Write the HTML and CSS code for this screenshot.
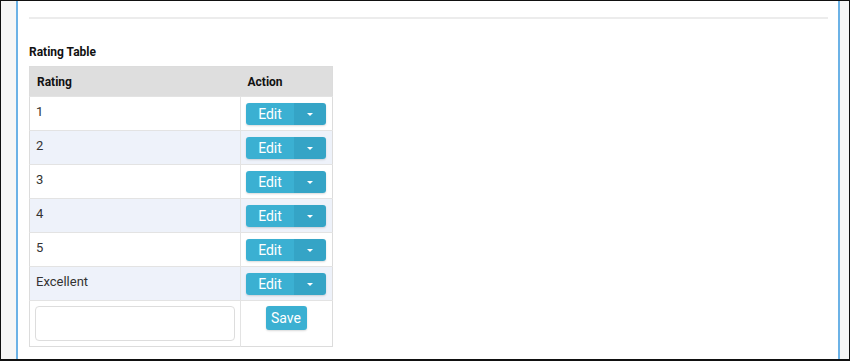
FILE: index.html
```html
<!DOCTYPE html>
<html lang="en">
<head>
    <meta charset="UTF-8">
    <meta name="viewport" content="width=device-width, initial-scale=1.0">
    <title>Rating Table</title>
    <link rel="stylesheet" href="styles.css">
</head>
<body>
    <div class="window">
        <div class="panel">
            <hr class="divider">
            <h4 class="table-title">Rating Table</h4>
            <table class="rating-table">
                <thead>
                    <tr>
                        <th class="col-rating">Rating</th>
                        <th class="col-action">Action</th>
                    </tr>
                </thead>
                <tbody>
                    <tr>
                        <td>1</td>
                        <td>
                            <div class="btn-group"><button class="btn-edit">Edit</button><button class="btn-caret"><span class="caret"></span></button></div>
                        </td>
                    </tr>
                    <tr>
                        <td>2</td>
                        <td>
                            <div class="btn-group"><button class="btn-edit">Edit</button><button class="btn-caret"><span class="caret"></span></button></div>
                        </td>
                    </tr>
                    <tr>
                        <td>3</td>
                        <td>
                            <div class="btn-group"><button class="btn-edit">Edit</button><button class="btn-caret"><span class="caret"></span></button></div>
                        </td>
                    </tr>
                    <tr>
                        <td>4</td>
                        <td>
                            <div class="btn-group"><button class="btn-edit">Edit</button><button class="btn-caret"><span class="caret"></span></button></div>
                        </td>
                    </tr>
                    <tr>
                        <td>5</td>
                        <td>
                            <div class="btn-group"><button class="btn-edit">Edit</button><button class="btn-caret"><span class="caret"></span></button></div>
                        </td>
                    </tr>
                    <tr>
                        <td>Excellent</td>
                        <td>
                            <div class="btn-group"><button class="btn-edit">Edit</button><button class="btn-caret"><span class="caret"></span></button></div>
                        </td>
                    </tr>
                    <tr class="new-row">
                        <td><input type="text" class="rating-input"></td>
                        <td class="save-cell"><button class="btn-save">Save</button></td>
                    </tr>
                </tbody>
            </table>
        </div>
    </div>
</body>
</html>
```

FILE: styles.css
```css
body {
    margin: 0;
    padding: 0;
    font-family: Roboto, "Liberation Sans", Arial, sans-serif;
    color: #222;
}
.window {
    height: 361px;
    box-sizing: border-box;
    border: 1px solid #111;
    border-bottom-width: 2px;
    background-color: #f6f6f6;
    padding: 0 9px 0 15px;
}
.panel {
    height: 100%;
    box-sizing: border-box;
    background-color: #fff;
    border-left: 2px solid #6cb2e6;
    border-right: 2px solid #6cb2e6;
    padding: 16px 10px 0 11px;
}
.divider {
    margin: 0;
    border: none;
    border-top: 2px solid #ececec;
}
.table-title {
    margin: 25px 0 6px;
    font-size: 12px;
    font-weight: bold;
    line-height: 16px;
    color: #111;
}
.rating-table {
    width: 304px;
    table-layout: fixed;
    border-collapse: collapse;
    border: 1px solid #dcdcdc;
    font-size: 12px;
}
.rating-table th {
    box-sizing: border-box;
    background-color: #dedede;
    text-align: left;
    font-weight: bold;
    height: 30px;
    padding: 0 7px;
    color: #111;
}
.col-rating {
    width: 211px;
}
.rating-table td {
    border-top: 1px solid #e3e3e3;
    height: 33px;
    padding: 0 6px;
    vertical-align: top;
    line-height: 30px;
    font-size: 13px;
    color: #333;
}
.rating-table td + td {
    border-left: 1px solid #e3e3e3;
    padding-left: 5px;
}
.rating-table tbody tr:nth-child(even) td {
    background-color: #eef2fa;
}
.btn-group {
    display: flex;
    width: 80px;
    height: 22px;
    margin-top: 6px;
    border-radius: 3px;
    overflow: hidden;
    box-shadow: 0 1px 2px rgba(0, 0, 0, 0.15);
}
.btn-edit,
.btn-caret,
.btn-save {
    border: none;
    color: #fff;
    font-family: Roboto, "Liberation Sans", Arial, sans-serif;
    font-size: 14px;
    padding: 0;
    cursor: pointer;
}
.btn-edit {
    width: 48px;
    background-color: #3bb0d2;
    line-height: 22px;
}
.btn-caret {
    flex: 1;
    background-color: #35a4c6;
    display: flex;
    align-items: center;
    justify-content: center;
}
.caret {
    width: 0;
    height: 0;
    border-left: 3px solid transparent;
    border-right: 3px solid transparent;
    border-top: 3px solid #fff;
}
.new-row td {
    height: 45px;
    background-color: #fff;
}
.new-row td:first-child {
    padding-left: 5px;
}
.rating-input {
    display: block;
    width: 200px;
    height: 35px;
    box-sizing: border-box;
    margin-top: 5px;
    border: 1px solid #ddd;
    border-radius: 4px;
}
.save-cell {
    text-align: center;
}
.btn-save {
    display: inline-block;
    vertical-align: top;
    margin-top: 5px;
    width: 41px;
    height: 24px;
    border-radius: 3px;
    background-color: #3bb0d2;
    box-shadow: 0 1px 2px rgba(0, 0, 0, 0.15);
    line-height: 24px;
}
```
